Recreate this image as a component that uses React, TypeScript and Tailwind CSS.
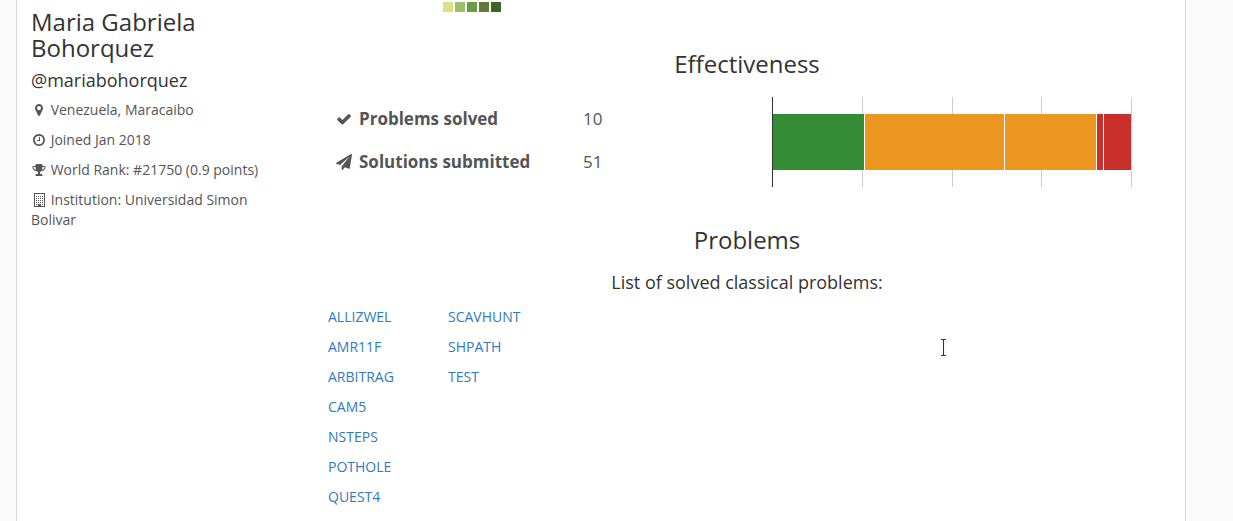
import type { ReactNode } from "react";

const legend = ["bg-[#dae289]", "bg-[#9cc069]", "bg-[#669d45]", "bg-[#637939]", "bg-[#3b6427]"];

const problemRows = [
  ["ALLIZWEL", "SCAVHUNT"],
  ["AMR11F", "SHPATH"],
  ["ARBITRAG", "TEST"],
  ["CAM5", ""],
  ["NSTEPS", ""],
  ["POTHOLE", ""],
  ["QUEST4", ""],
];

const icons = {
  marker:
    "M1152 640q0-106-75-181t-181-75-181 75-75 181 75 181 181 75 181-75 75-181zm256 0q0 109-33 179l-364 774q-16 33-47.5 52t-67.5 19-67.5-19-46.5-52l-365-774q-33-70-33-179 0-212 150-362t362-150 362 150 150 362z",
  clock:
    "M1024 544v448q0 14-9 23t-23 9h-320q-14 0-23-9t-9-23v-64q0-14 9-23t23-9h224v-352q0-14 9-23t23-9h64q14 0 23 9t9 23zm416 352q0-148-73-273t-198-198-273-73-273 73-198 198-73 273 73 273 198 198 273 73 273-73 198-198 73-273zm224 0q0 209-103 385.5t-279.5 279.5-385.5 103-385.5-103-279.5-279.5-103-385.5 103-385.5 279.5-279.5 385.5-103 385.5 103 279.5 279.5 103 385.5z",
  trophy:
    "M522 883q-74-162-74-371h-256v96q0 78 94.500 162t235.500 113zm1078-275v-96h-256q0 209-74 371 141-29 235.500-113t94.500-162zm128-128v128q0 71-41.500 143t-112 130-173 97.500-215.500 44.500q-42 54-95 95-38 34-52.500 72.500t-14.500 89.500q0 54 30.500 91t97.500 37q75 0 133.500 45.500t58.500 114.500v64q0 14-9 23t-23 9h-832q-14 0-23-9t-9-23v-64q0-69 58.500-114.500t133.500-45.500q67 0 97.500-37t30.500-91q0-51-14.500-89.500t-52.500-72.500q-53-41-95-95-113-5-215.500-44.500t-173-97.500-112-130-41.500-143v-128q0-40 28-68t68-28h288v-96q0-66 47-113t113-47h576q66 0 113 47t47 113v96h288q40 0 68 28t28 68z",
  check:
    "M1671 566q0 40-28 68l-724 724-136 136q-28 28-68 28t-68-28l-136-136-362-362q-28-28-28-68t28-68l136-136q28-28 68-28t68 28l294 295 656-657q28-28 68-28t68 28l136 136q28 28 28 68z",
  plane:
    "M1764 11q33 24 27 64l-256 1536q-5 29-32 45-14 8-31 8-11 0-24-5l-453-185-242 295q-18 23-49 23-13 0-22-4-19-7-30.500-23.500t-11.500-36.500v-349l864-1059-1069 925-395-162q-37-14-40-55-2-40 32-59l1664-960q15-9 32-9 20 0 36 11z",
};

function Glyph({ name, className }: { name: keyof typeof icons; className: string }) {
  return (
    <svg viewBox="0 0 1792 1792" fill="currentColor" aria-hidden="true" className={className}>
      <path d={icons[name]} />
    </svg>
  );
}

function BuildingIcon() {
  const xs = [2, 4, 6, 8];
  const ys = [3, 5, 7, 9];
  return (
    <svg viewBox="0 0 11 14" fill="currentColor" shapeRendering="crispEdges" aria-hidden="true" className="h-[14px] w-[11px]">
      <path fillRule="evenodd" d="M0 0h11v14H0zM1 1v12h3v-2h3v2h3V1z" />
      {ys.flatMap((y) => xs.map((x) => <rect key={x + "-" + y} x={x} y={y} width="1" height="1" />))}
      <rect x="2" y="11" width="1" height="1" />
      <rect x="8" y="11" width="1" height="1" />
    </svg>
  );
}

function Detail({ icon, children }: { icon: ReactNode; children: ReactNode }) {
  return (
    <p className="mb-[10px]">
      <span className="inline-flex h-[14px] w-4 items-center justify-center align-[-2px]">{icon}</span> {children}
    </p>
  );
}

function EffectivenessChart() {
  return (
    <svg width="360" height="90" viewBox="0 0 360 90" role="img" aria-label="Effectiveness" shapeRendering="crispEdges">
      <g fill="#cccccc">
        <rect x="90" width="1" height="90" />
        <rect x="180" width="1" height="90" />
        <rect x="269" width="1" height="90" />
        <rect x="359" width="1" height="90" />
      </g>
      <rect x="1" y="17" width="358" height="56" fill="#ffffff" />
      <rect x="1" y="17" width="91" height="56" fill="#348d34" />
      <rect x="93" y="17" width="139" height="56" fill="#ec971f" />
      <rect x="233" y="17" width="91" height="56" fill="#ec971f" />
      <rect x="325" y="17" width="6" height="56" fill="#c9302c" />
      <rect x="332" y="17" width="27" height="56" fill="#c9302c" />
      <rect width="1" height="90" fill="#333333" />
    </svg>
  );
}

export default function App() {
  return (
    <div className="relative min-h-screen bg-[#fafafa] font-['Open_Sans','Noto_Sans',sans-serif] text-sm leading-5 text-[#555555]">
      <div className="mr-[47px] ml-4 flex min-h-screen border-x border-[#d9dade] bg-white">
        <aside className="w-1/4 shrink-0 px-[14px] pt-[9px]">
          <h3 className="text-2xl leading-[26px] text-[#333333]">Maria Gabriela Bohorquez</h3>
          <h4 className="mt-[9px] mb-[10px] text-lg leading-5 text-[#333333]">@mariabohorquez</h4>
          <Detail icon={<Glyph name="marker" className="size-[14px]" />}>Venezuela, Maracaibo</Detail>
          <Detail icon={<Glyph name="clock" className="size-[14px]" />}>Joined Jan 2018</Detail>
          <Detail icon={<Glyph name="trophy" className="size-[14px]" />}>World Rank: #21750 (0.9 points)</Detail>
          <Detail icon={<BuildingIcon />}>Institution: Universidad Simon Bolivar</Detail>
        </aside>
        <main className="min-w-0 flex-1 px-[15px]">
          <div className="flex gap-[2px] pt-[2px] pl-[119px]">
            {legend.map((color) => (
              <span key={color} className={`size-[10px] ${color}`} />
            ))}
          </div>
          <h3 className="mt-[39px] text-center text-2xl leading-[26px] text-[#333333]">Effectiveness</h3>
          <div className="mt-5 flex justify-between pr-[38px] pl-1">
            <table className="self-start text-[17px]">
              <tbody>
                <tr className="h-[43px]">
                  <th scope="row" className="w-[247px] px-2 text-left font-bold">
                    <Glyph name="check" className="mr-[7px] inline size-4 align-[-2px]" />
                    Problems solved
                  </th>
                  <td className="px-2">10</td>
                </tr>
                <tr className="h-[43px]">
                  <th scope="row" className="w-[247px] px-2 text-left font-bold">
                    <Glyph name="plane" className="mr-[7px] inline size-4 align-[-2px]" />
                    Solutions submitted
                  </th>
                  <td className="px-2">51</td>
                </tr>
              </tbody>
            </table>
            <EffectivenessChart />
          </div>
          <h3 className="mt-10 text-center text-2xl leading-[26px] text-[#333333]">Problems</h3>
          <h4 className="mt-[19px] text-center text-lg leading-5 text-[#333333]">List of solved classical problems:</h4>
          <table className="mt-[10px] ml-1">
            <tbody>
              {problemRows.map((row) => (
                <tr key={row[0]} className="h-[30px]">
                  {row.map((code, i) => (
                    <td key={i} className="w-[120px]">
                      {code && (
                        <a href={`#${code}`} className="text-[#337ab7] hover:underline">
                          {code}
                        </a>
                      )}
                    </td>
                  ))}
                </tr>
              ))}
            </tbody>
          </table>
        </main>
      </div>
      <svg
        viewBox="0 0 5 17"
        fill="#333333"
        aria-hidden="true"
        shapeRendering="crispEdges"
        className="pointer-events-none absolute top-[339px] left-[941px] h-[17px] w-[5px] drop-shadow-sm"
      >
        <rect width="5" height="1" />
        <rect x="2" width="1" height="17" />
        <rect y="16" width="5" height="1" />
      </svg>
    </div>
  );
}
